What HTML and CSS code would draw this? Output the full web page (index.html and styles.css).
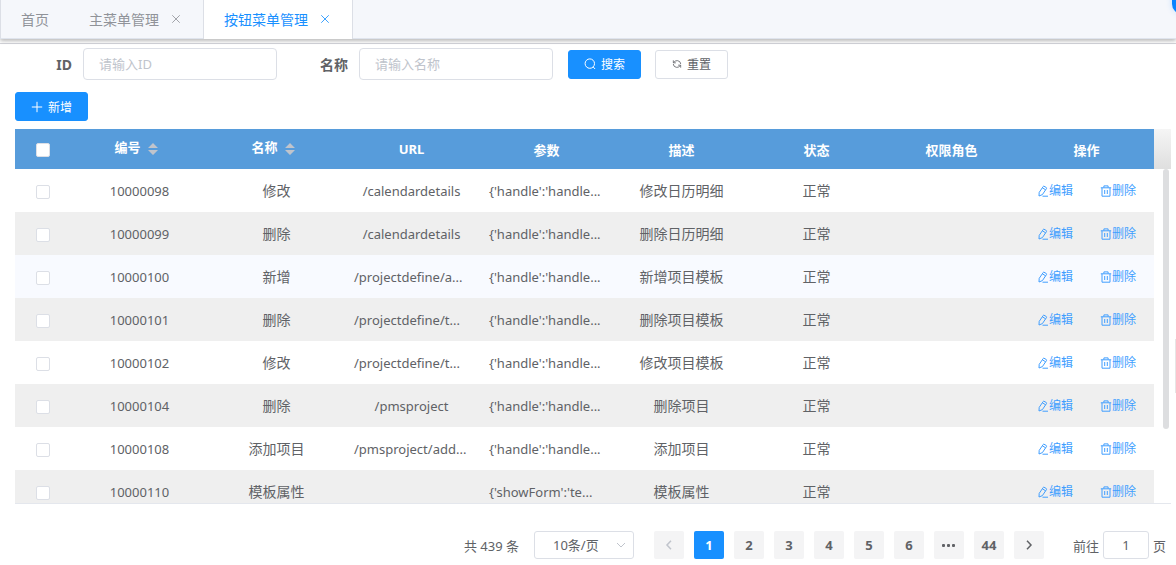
FILE: index.html
```
<!DOCTYPE html>
<html lang="zh-CN">
<head>
<meta charset="utf-8">
<title>按钮菜单管理</title>
<link rel="stylesheet" href="styles.css">
</head>
<body>
<svg class="sprite" aria-hidden="true">
  <symbol id="i-close" viewBox="0 0 12 12"><path d="M1.5 1.5l9 9M10.5 1.5l-9 9"/></symbol>
  <symbol id="i-search" viewBox="0 0 12 12"><circle cx="5.8" cy="5.6" r="4.7"/><path d="M9.2 9l1.9 2"/></symbol>
  <symbol id="i-refresh" viewBox="0 0 12 12"><path d="M1.6 1.6v3h3M2 4.4A4.5 4.5 0 0 1 10.5 6M10.4 10.4v-3h-3M10 7.6A4.5 4.5 0 0 1 1.5 6"/></symbol>
  <symbol id="i-plus" viewBox="0 0 12 12"><path d="M6 .8v10.4M.8 6h10.4"/></symbol>
  <symbol id="i-edit" viewBox="0 0 12 12"><path d="M7 1.2l2.4 1.4q.5.3.2.8L5.4 9.6 2 11l.2-3.6L6.2 1.5q.3-.5.8-.3zM5.4 2.8l3.2 2M5.5 11.2H11"/></symbol>
  <symbol id="i-trash" viewBox="0 0 12 12"><path d="M.8 2.8h10.4M3.9 2.6V.9h4.2v1.7M2 2.8v8.4h8V2.8M4.7 5v4M7.3 5v4"/></symbol>
  <symbol id="i-down" viewBox="0 0 12 12"><path d="M2 4l4 4 4-4"/></symbol>
  <symbol id="i-left" viewBox="0 0 12 12"><path d="M8 1.8L4 6l4 4.2"/></symbol>
  <symbol id="i-right" viewBox="0 0 12 12"><path d="M4 1.8L8 6l-4 4.2"/></symbol>
  <symbol id="i-sort" viewBox="0 0 10 12"><path d="M5 0l5 5H0zM0 7h10l-5 5z"/></symbol>
</svg>

<nav class="tabs">
  <a class="tab" href="#">首页</a>
  <a class="tab" href="#">主菜单管理<svg class="icon"><use href="#i-close"/></svg></a>
  <a class="tab active" href="#">按钮菜单管理<svg class="icon"><use href="#i-close"/></svg></a>
  <span class="bubble"></span>
</nav>

<main class="page">
  <form class="search">
    <label for="f-id">ID</label>
    <input class="field" id="f-id" type="text" placeholder="请输入ID">
    <label for="f-name">名称</label>
    <input class="field" id="f-name" type="text" placeholder="请输入名称">
    <div class="actions">
      <button class="btn primary" type="button"><svg class="icon"><use href="#i-search"/></svg>搜索</button>
      <button class="btn" type="button"><svg class="icon small"><use href="#i-refresh"/></svg>重置</button>
    </div>
  </form>
  <div class="toolbar">
    <button class="btn primary" type="button"><svg class="icon"><use href="#i-plus"/></svg>新增</button>
  </div>

  <div class="grid">
    <table class="table">
      <colgroup><col class="c-check"><col class="c-id"><col><col><col><col><col><col><col></colgroup>
      <thead>
        <tr>
          <th><input type="checkbox" aria-label="全选"></th>
          <th class="sortable">编号<svg class="sort"><use href="#i-sort"/></svg></th>
          <th class="sortable">名称<svg class="sort"><use href="#i-sort"/></svg></th>
          <th>URL</th><th>参数</th><th>描述</th><th>状态</th><th>权限角色</th><th>操作</th>
        </tr>
      </thead>
      <tbody id="rows"></tbody>
    </table>
    <div class="gutter"><div class="gutter-head"></div><div class="thumb"></div></div>
  </div>

  <div class="pager">
    <span class="total">共 439 条</span>
    <span class="size">
      <select aria-label="每页条数"><option>10条/页</option></select>
      <svg class="icon"><use href="#i-down"/></svg>
    </span>
    <div class="pages">
      <button type="button" disabled aria-label="上一页"><svg class="icon"><use href="#i-left"/></svg></button>
      <button type="button" class="current">1</button>
      <button type="button">2</button>
      <button type="button">3</button>
      <button type="button">4</button>
      <button type="button">5</button>
      <button type="button">6</button>
      <button type="button" aria-label="更多"><span class="dots"><i></i><i></i><i></i></span></button>
      <button type="button">44</button>
      <button type="button" aria-label="下一页"><svg class="icon"><use href="#i-right"/></svg></button>
    </div>
    <label class="jump">前往<input type="text" value="1">页</label>
  </div>
</main>
<span class="handle"></span>
<script src="rows.js"></script>
</body>
</html>
```
FILE: styles.css
```
* { box-sizing: border-box; }
body {
  margin: 0;
  font-family: "Noto Sans", "Noto Sans CJK SC", sans-serif;
  font-size: 14px;
  color: #606266;
  background: #fff;
  overflow: hidden;
}
button, input, select { font: inherit; color: inherit; }
.sprite { display: none; }
.icon { width: 12px; height: 12px; fill: none; stroke: currentColor; stroke-width: 1; flex: none; }
.icon.small { width: 10px; height: 10px; }

.tabs {
  position: relative;
  display: flex;
  height: 39px;
  background: #f5f7fb;
  border-left: 1px solid #dcdfe6;
  border-bottom: 1px solid #dfe4ed;
  box-shadow: 0 2px 4px rgba(0, 0, 0, .24), 0 0 6px rgba(0, 0, 0, .08);
}
.tab {
  display: flex;
  align-items: center;
  gap: 12px;
  height: 39px;
  padding: 0 20px 2px;
  color: #909399;
  text-decoration: none;
}
.tab .icon { width: 10px; height: 10px; }
.tab + .tab { padding-right: 22px; }
.tab.active {
  color: #1890ff;
  background: #fff;
  border-left: 1px solid #dcdfe6;
  border-right: 1px solid #dcdfe6;
}
.bubble {
  position: absolute;
  top: -20px;
  right: -28px;
  width: 32px;
  height: 34px;
  border-radius: 10px;
  background: #0a84ff;
  box-shadow: 0 0 6px rgba(10, 132, 255, .2);
}

.page { margin-top: 4px; border-top: 1px solid #d3d4da; padding: 4px 5px 0 15px; }
.search { display: flex; align-items: center; height: 32px; }
.search label { width: 68px; padding-right: 11px; text-align: right; font-weight: 700; }
.field {
  width: 194px;
  height: 32px;
  padding: 0 15px;
  border: 1px solid #dcdfe6;
  border-radius: 4px;
  font-size: 13px;
  background: #fff;
}
.field + label { width: 82px; }
.field::placeholder { color: #c0c4cc; }
.actions { display: flex; gap: 14px; margin-left: 15px; }
.btn {
  display: inline-flex;
  align-items: center;
  justify-content: center;
  gap: 5px;
  width: 73px;
  height: 29px;
  padding: 0;
  border: 1px solid #dcdfe6;
  border-radius: 3px;
  background: #fff;
  font-size: 12px;
}
.btn.primary { color: #fff; background: #1890ff; border-color: #1890ff; }
.toolbar { display: flex; padding: 12px 0 8px; }

.grid { display: flex; height: 375px; overflow: hidden; border-bottom: 1px solid #e4e7ed; }
.table { flex: 1; width: 100%; table-layout: fixed; border-collapse: collapse; text-align: center; }
.c-check { width: 55px; }
.c-id { width: 139px; }
th { height: 40px; padding: 0 10px; font-size: 13px; color: #fff; background: #579cdb; }
th:first-child { padding-top: 2px; }
th.sortable { padding-bottom: 6px; }
td { height: 43px; padding: 0 10px; white-space: nowrap; overflow: hidden; line-height: 20px; }
td:first-child { padding-top: 2px; }
.latin { font-size: 13px; }
.cut { text-align: left; }
tbody tr:nth-child(even) { background: #efefef; }
tbody tr.hover { background: #f8faff; }
.sort { width: 10px; height: 12px; margin: 0 7px; fill: #c0c4cc; vertical-align: -3px; }
input[type="checkbox"] {
  appearance: none;
  display: block;
  width: 14px;
  height: 14px;
  margin: 0 auto;
  border: 1px solid #dcdfe6;
  border-radius: 2px;
  background: #fff;
}
.ops { display: flex; justify-content: space-between; padding: 0 8px; font-size: 12px; }
.ops a { display: flex; align-items: center; color: #409eff; text-decoration: none; }
.gutter { width: 17px; }
.gutter-head { height: 40px; background: linear-gradient(#f5f5f5, #dfdfdf); }
.thumb { width: 6px; height: 260px; margin-left: 9px; border-radius: 3px; background: #dddee0; }

.pager { display: flex; align-items: center; justify-content: flex-end; padding: 27px 5px 0 0; font-size: 13px; }
.size { position: relative; width: 100px; height: 28px; margin: 0 20px 0 15px; }
.size select {
  appearance: none;
  width: 100%;
  height: 28px;
  padding: 0 18px;
  border: 1px solid #dcdfe6;
  border-radius: 3px;
  background: #fff;
}
.size .icon { position: absolute; top: 8px; right: 7px; color: #c0c4cc; }
.pages { display: flex; gap: 10px; }
.pages button {
  display: flex;
  align-items: center;
  justify-content: center;
  width: 30px;
  height: 28px;
  padding: 0;
  border: 0;
  border-radius: 2px;
  background: #f4f4f5;
  font-weight: 700;
}
.pages .icon { stroke-width: 1.5; }
.pages button:disabled { color: #c0c4cc; }
.pages .current { background: #1890ff; color: #fff; }
.dots { display: flex; gap: 2px; }
.dots i { width: 3px; height: 3px; border-radius: 1px; background: #606266; }
.jump { display: flex; align-items: center; margin-left: 29px; }
.jump input {
  width: 46px;
  height: 28px;
  margin: 0 4px;
  padding: 0;
  border: 1px solid #dcdfe6;
  border-radius: 3px;
  text-align: center;
}
.handle { position: absolute; top: 339px; right: 0; width: 1px; height: 54px; background: #e6e6e6; }
```
FILE: rows.js
```
const rows = [
  ["10000098", "修改", "/calendardetails", "{'handle':'handle...", "修改日历明细"],
  ["10000099", "删除", "/calendardetails", "{'handle':'handle...", "删除日历明细"],
  ["10000100", "新增", "/projectdefine/a...", "{'handle':'handle...", "新增项目模板"],
  ["10000101", "删除", "/projectdefine/t...", "{'handle':'handle...", "删除项目模板"],
  ["10000102", "修改", "/projectdefine/t...", "{'handle':'handle...", "修改项目模板"],
  ["10000104", "删除", "/pmsproject", "{'handle':'handle...", "删除项目"],
  ["10000108", "添加项目", "/pmsproject/add...", "{'handle':'handle...", "添加项目"],
  ["10000110", "模板属性", "", "{'showForm':'te...", "模板属性"],
];
const latin = (text) => `<td class="latin${text.endsWith("...") ? " cut" : ""}">${text}</td>`;
document.getElementById("rows").innerHTML = rows.map(([id, name, url, params, desc], i) => `
  <tr${i === 2 ? ' class="hover"' : ""}>
    <td><input type="checkbox" aria-label="${id}"></td>
    ${latin(id)}<td>${name}</td>${latin(url)}${latin(params)}
    <td>${desc}</td><td>正常</td><td></td>
    <td><div class="ops">
      <a href="#"><svg class="icon"><use href="#i-edit"/></svg>编辑</a>
      <a href="#"><svg class="icon"><use href="#i-trash"/></svg>删除</a>
    </div></td>
  </tr>`).join("");
```
